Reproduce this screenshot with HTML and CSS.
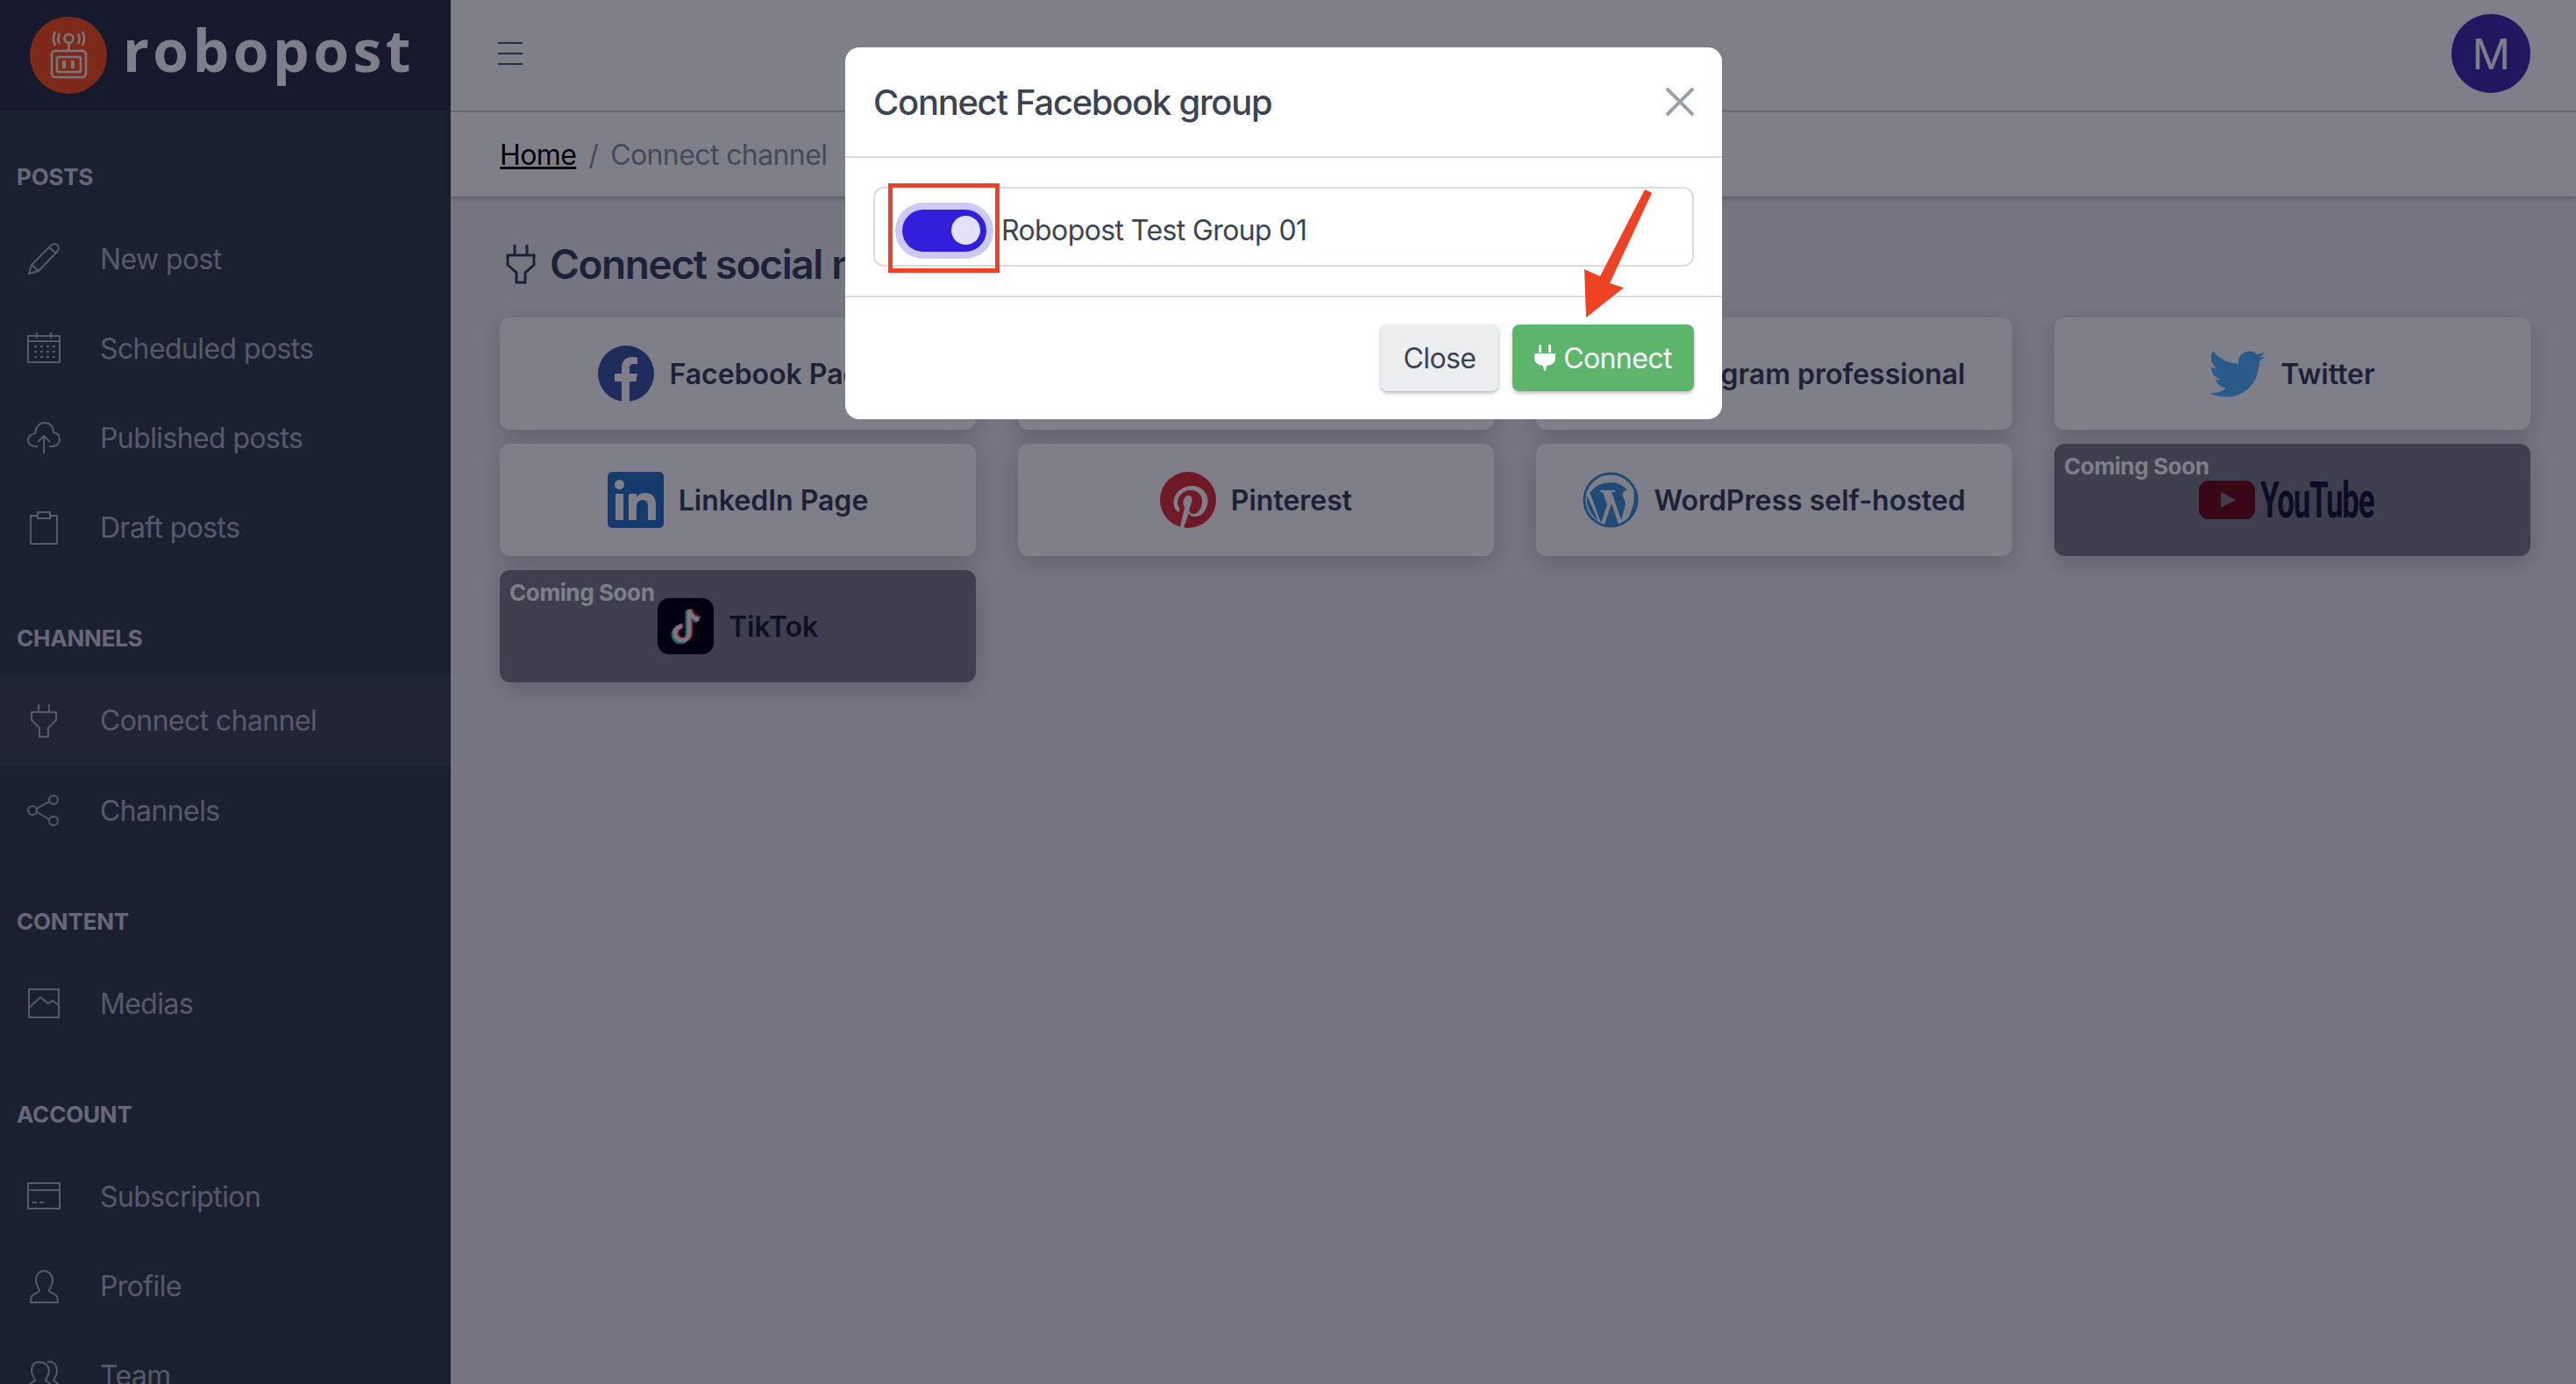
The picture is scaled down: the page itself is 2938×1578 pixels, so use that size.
FILE: index.html
```html
<!DOCTYPE html>
<html lang="en">

<head>
    <meta charset="utf-8">
    <title>Connect channel</title>
    <link rel="stylesheet" href="styles.css">
</head>

<body>
    <div class="app">
        <aside class="sidebar">
            <div class="brand">
                <span class="brand-logo">
                    <svg viewBox="0 0 88 88" width="88" height="88" fill="none" stroke="currentColor" stroke-width="2.5">
                        <rect x="25" y="39" width="39" height="30" rx="4" />
                        <rect x="31" y="46" width="27" height="17" rx="2" />
                        <path d="M39 50v9M49 50v9" stroke-width="4" />
                        <circle cx="44.500" cy="25" r="5" />
                        <path d="M44.500 30v9M34 19q-3 6 0 12M29 17q-4 8 0 16M55 19q3 6 0 12M60 17q4 8 0 16" />
                    </svg>
                </span>
                <span class="brand-name">robopost</span>
            </div>
            <nav class="nav">
                <div class="nav-title">Posts</div>
                <a class="nav-link">
                    <svg class="nav-icon" viewBox="0 0 38 38"><path d="M2 36l3-10L27 4q4-3 7-1t1 7L13 33zM5 26l8 7M25 6l8 7" /></svg>
                    New post
                </a>
                <a class="nav-link">
                    <svg class="nav-icon" viewBox="0 0 38 38"><path d="M1 5h36v30H1zM11 1v7M27 1v7M1 11h36" /><path d="M8 17h3M15 17h3M22 17h3M29 17h3M8 23h3M15 23h3M22 23h3M29 23h3M8 29h3M15 29h3M22 29h3M29 29h3" /></svg>
                    Scheduled posts
                </a>
                <a class="nav-link">
                    <svg class="nav-icon" viewBox="0 0 38 38"><path d="M12 29H9q-8-1-8-7t8-8q2-12 11-12t10 11q7 1 7 8t-8 8h-4M19 37V18M12 24l7-7 7 7" /></svg>
                    Published posts
                </a>
                <a class="nav-link">
                    <svg class="nav-icon" viewBox="0 0 38 38"><path d="M12 5H4v32h30V5h-8M12 1h14v7H12z" /></svg>
                    Draft posts
                </a>
                <div class="nav-title">Channels</div>
                <a class="nav-link is-active">
                    <svg class="nav-icon" viewBox="0 0 38 38"><path d="M13 0v9M25 0v9M5 9h28v9L24 27v10H14V27L5 18z" /></svg>
                    Connect channel
                </a>
                <a class="nav-link">
                    <svg class="nav-icon" viewBox="0 0 38 38"><circle cx="6" cy="19" r="5" /><circle cx="30" cy="7" r="5" /><circle cx="30" cy="31" r="5" /><path d="M11 17l14-8M11 21l14 8" /></svg>
                    Channels
                </a>
                <div class="nav-title">Content</div>
                <a class="nav-link">
                    <svg class="nav-icon" viewBox="0 0 38 38"><path d="M2 3h34v32H2zM2 24l13-12 9 7 5-3 7 5" /></svg>
                    Medias
                </a>
                <div class="nav-title">Account</div>
                <a class="nav-link">
                    <svg class="nav-icon" viewBox="0 0 38 38"><path d="M1 4h36v29H1zM1 12h36M6 26h5M14 26h5" /></svg>
                    Subscription
                </a>
                <a class="nav-link">
                    <svg class="nav-icon" viewBox="0 0 38 38"><path d="M19 1c-6 0-9 5-9 11s4 9 4 12l-8 5q-2 2-2 8h31q0-6-2-8l-8-5c0-3 4-6 4-12S25 1 19 1zM4 37h31" /></svg>
                    Profile
                </a>
                <a class="nav-link">
                    <svg class="nav-icon" viewBox="0 0 38 38"><path d="M14 3c-6 0-9 4-9 10s4 8 4 11l-7 5v8h26v-8l-7-5c0-3 4-5 4-11S20 3 14 3zM23 3c6-2 11 3 11 10s-4 8-4 11l7 5v8" /></svg>
                    Team
                </a>
            </nav>
        </aside>

        <div class="wrapper">
            <header class="topbar">
                <span class="burger"><i></i><i></i><i></i></span>
                <span class="avatar">M</span>
            </header>
            <div class="crumbs">
                <a class="crumb-link">Home</a>
                <span class="crumb-sep">/</span>
                <span class="crumb-current">Connect channel</span>
            </div>
            <main class="content">
                <h1 class="page-title">
                    <svg class="title-icon" viewBox="0 0 34 46"><path d="M10 1v12M24 1v12M2 13h30v11L22 33v11H12V33L2 24z" /></svg>
                    Connect social media
                </h1>
                <div class="card-grid">
                    <div class="card">
                        <svg class="card-icon" viewBox="0 0 64 64"><circle cx="32" cy="32" r="32" fill="#3e5aa2" /><path d="M27 64V41h-8v-9h8v-7c0-8 5-12 12-12q4 0 6 .5V21h-4c-4 0-5 2-5 5v6h9l-1.500 9H36v23z" fill="#fff" /></svg>
                        <span>Facebook Page</span>
                    </div>
                    <div class="card">
                        <svg class="card-icon" viewBox="0 0 64 64"><circle cx="32" cy="32" r="32" fill="#3e5aa2" /></svg>
                        <span>Facebook Group</span>
                    </div>
                    <div class="card">
                        <svg class="card-icon" viewBox="0 0 64 64"><rect width="64" height="64" rx="16" fill="#c13584" /></svg>
                        <span>Instagram professional</span>
                    </div>
                    <div class="card">
                        <svg class="card-icon" viewBox="0 0 64 54"><path d="M64 7q-3.500 1.600-7.500 2 4-2.500 6-7-4 2.300-8.300 3.100C47 -3 31 3 33 16 20 15 10 9 4 1c-4 7-2 15 4 20q-3 0-6-1.500C2 26 6 32 13 33.500q-3 .8-6 .2c2 6 7 9 12 10-5 4-12 6-19 5 24 13 56 0 57-36q4-2.500 7-6z" fill="#54b4ff" /></svg>
                        <span>Twitter</span>
                    </div>
                    <div class="card">
                        <svg class="card-icon" viewBox="0 0 64 64"><rect width="64" height="64" rx="5" fill="#2e74c4" /><path d="M9 25h9v30H9zM13.500 9a5.500 5.500 0 1 1 0 11 5.500 5.500 0 0 1 0-11zM24 25h9v4c2-3 5-5 10-5 9 0 12 6 12 14v17h-9V40c0-5-1.500-8-6-8s-7 3-7 8v15h-9z" fill="#fff" /></svg>
                        <span>LinkedIn Page</span>
                    </div>
                    <div class="card">
                        <svg class="card-icon" viewBox="0 0 64 64"><circle cx="32" cy="32" r="32" fill="#e23438" /><path d="M23 63l5-22q-1.500-3-1.500-6c0-5 3-8 6-8 3 0 4 2 4 4.500 0 3-2 7-3 11-.7 3 1.500 5.500 4.500 5.500 6 0 10-7 10-15 0-7-5-12-13-12-9 0-15 7-15 14q0 4 2.500 7l-1 4q-6-3-6-11c0-9 8-19 21-19 11 0 18 8 18 16 0 11-6 19-15 19-3 0-6-2-7-4l-2 7q-1.500 5-4 10z" fill="#fff" /></svg>
                        <span>Pinterest</span>
                    </div>
                    <div class="card">
                        <svg class="card-icon" viewBox="0 0 64 64"><circle cx="32" cy="32" r="30" fill="none" stroke="#3e96d6" stroke-width="3" /><path d="M8 23l13 35 7-20-5-15h-3v-2h17v2h-4l11 32 4-14c2-7-1-10-2-13-1-4 1-7 5-7q-8-9-19-9-15 0-23 11h5zM5 27q-2 16 13 29zM33 36l-8 24q7 2 16 0zM58 21q3 12-5 30l-6 7q14-8 14-26 0-6-3-11z" fill="#3e96d6" /></svg>
                        <span>WordPress self-hosted</span>
                    </div>
                    <div class="card is-soon">
                        <span class="soon-tag">Coming Soon</span>
                        <span class="yt-logo">
                            <svg class="yt-icon" viewBox="0 0 64 44"><rect width="64" height="44" rx="11" fill="#750e1c" /><path d="M25 13l17 9-17 9z" fill="#7e7e8a" /></svg>
                            <span class="yt-name">YouTube</span>
                        </span>
                    </div>
                    <div class="card is-soon">
                        <span class="soon-tag">Coming Soon</span>
                        <svg class="card-icon" viewBox="0 0 64 64">
                            <rect width="64" height="64" rx="13" fill="#00000a" />
                            <path d="M36 13v27a8 8 0 1 1-8-8M36 13q1 9 11 11" fill="none" stroke="#3ec0c4" stroke-width="6" transform="translate(-1.500 1.500)" />
                            <path d="M36 13v27a8 8 0 1 1-8-8M36 13q1 9 11 11" fill="none" stroke="#fe2c55" stroke-width="6" transform="translate(1.500 -.5)" />
                            <path d="M36 13v27a8 8 0 1 1-8-8M36 13q1 9 11 11" fill="none" stroke="#eee" stroke-width="5" />
                        </svg>
                        <span>TikTok</span>
                    </div>
                </div>
            </main>
        </div>
    </div>

    <div class="backdrop"></div>

    <div class="modal">
        <div class="modal-header">
            <h2 class="modal-title">Connect Facebook group</h2>
            <svg class="modal-close" viewBox="0 0 32 32"><path d="M1 1l30 30M31 1L1 31" /></svg>
        </div>
        <div class="modal-body">
            <div class="list-item">
                <span class="toggle"><span class="toggle-thumb"></span></span>
                <span>Robopost Test Group 01</span>
            </div>
        </div>
        <div class="modal-footer">
            <button class="btn btn-light">Close</button>
            <button class="btn btn-green">
                <svg class="btn-icon" viewBox="0 0 24 30"><path d="M5 0h3v9H5zM16 0h3v9h-3zM0 10h24v5c0 5-3 8-10 9l-1 6h-2l-1-6C3 23 0 20 0 15z" /></svg>
                Connect
            </button>
        </div>
        <span class="mark-box"></span>
        <svg class="mark-arrow" viewBox="0 0 90 160"><path d="M76 6l8 4-48 103 16 5-43 34-2-55 18 8z" /></svg>
    </div>
</body>

</html>
```

FILE: styles.css
```css
* {
    margin: 0;
    padding: 0;
    box-sizing: border-box;
}

html,
body {
    height: 100%;
    overflow: hidden;
}

body {
    font-family: 'Inter', 'Liberation Sans', sans-serif;
    font-size: 32px;
    letter-spacing: -0.6px;
    color: #2c384a;
    background-color: #ebedef;
}

.app {
    display: flex;
    height: 100vh;
}

.sidebar {
    flex: 0 0 514px;
    background-color: #38424c;
    color: #b0b4bf;
    overflow: hidden;
}

.brand {
    display: flex;
    align-items: center;
    gap: 18px;
    height: 126px;
    padding-left: 34px;
    background-color: #2c3443;
    color: #fff;
}

.brand-logo {
    display: block;
    width: 88px;
    height: 88px;
    border-radius: 50%;
    background-color: #fa5420;
    color: #f4ece8;
}

.brand-name {
    font-family: 'Open Sans', sans-serif;
    font-size: 66px;
    font-weight: 700;
    letter-spacing: 4.400px;
    line-height: 1;
    margin-top: -14px;
}

.nav-title {
    display: flex;
    align-items: center;
    height: 86px;
    margin-top: 32px;
    padding-left: 19px;
    font-size: 26px;
    font-weight: 700;
    letter-spacing: -0.2px;
    text-transform: uppercase;
    color: #d0d3db;
}

.nav-link {
    display: flex;
    align-items: center;
    gap: 45px;
    height: 102.200px;
    padding-left: 31px;
}

.nav-link.is-active {
    background-color: rgba(255, 255, 255, 0.05);
}

.nav-icon {
    flex: none;
    width: 38px;
    height: 38px;
    fill: none;
    stroke: currentColor;
    stroke-width: 2;
}

.wrapper {
    flex: 1;
    display: flex;
    flex-direction: column;
    min-width: 0;
}

.topbar {
    display: flex;
    align-items: center;
    justify-content: space-between;
    height: 128px;
    padding: 0 52px 4px 54px;
    background-color: #fff;
    border-bottom: 2px solid #d8dbe0;
}

.burger {
    display: flex;
    flex-direction: column;
    gap: 10px;
    width: 28px;
}

.burger i {
    display: block;
    height: 2px;
    background-color: #4f5d73;
}

.avatar {
    display: flex;
    align-items: center;
    justify-content: center;
    width: 90px;
    height: 90px;
    border-radius: 50%;
    background-color: #442ead;
    color: #fff;
    font-size: 48px;
}

.crumbs {
    display: flex;
    align-items: center;
    gap: 14px;
    height: 96px;
    padding-left: 56px;
    background-color: #fff;
    box-shadow: 0 2px 6px rgba(0, 0, 21, 0.25);
    position: relative;
}

.crumb-link {
    color: #000;
    text-decoration: underline;
}

.crumb-sep,
.crumb-current {
    color: #8a93a2;
}

.content {
    padding: 41px 52px 0 56px;
}

.page-title {
    display: flex;
    align-items: center;
    gap: 16px;
    height: 72px;
    margin-bottom: 25px;
    padding-left: 7px;
    font-size: 46px;
    font-weight: 600;
    letter-spacing: -1.400px;
    white-space: nowrap;
    color: #3c4457;
}

.title-icon {
    flex: none;
    width: 34px;
    height: 46px;
    fill: none;
    stroke: currentColor;
    stroke-width: 3;
}

.card-grid {
    display: grid;
    grid-template-columns: repeat(4, 543px);
    grid-auto-rows: 128px;
    column-gap: 48px;
    row-gap: 16px;
}

.card {
    position: relative;
    display: flex;
    align-items: center;
    justify-content: center;
    gap: 17px;
    border-radius: 12px;
    background-color: #fff;
    box-shadow: 0 8px 28px rgba(0, 0, 21, 0.18);
    font-size: 32px;
    font-weight: 600;
    letter-spacing: 0;
    color: #3c4457;
}

.card.is-soon {
    background-color: #7e7e8a;
    color: #1e2030;
}

.card-icon {
    flex: none;
    width: 64px;
    height: 64px;
}

.soon-tag {
    position: absolute;
    top: 10px;
    left: 11px;
    font-size: 26px;
    line-height: 32px;
    font-weight: 700;
    letter-spacing: -0.4px;
    color: #fff;
}

.yt-logo {
    display: flex;
    align-items: center;
    gap: 6px;
    width: 214px;
}

.yt-icon {
    flex: none;
    width: 64px;
    height: 44px;
}

.yt-name {
    display: block;
    font-family: 'Roboto', sans-serif;
    font-size: 58px;
    font-weight: 700;
    letter-spacing: -2px;
    line-height: 1;
    color: #18182e;
    transform: scaleX(0.6);
    transform-origin: left center;
}

.backdrop {
    position: fixed;
    inset: 0;
    background-color: rgba(0, 0, 21, 0.5);
}

.modal {
    position: fixed;
    top: 54px;
    left: 964px;
    width: 1000px;
    background-color: #fff;
    border-radius: 16px;
    color: #3c4454;
}

.modal-header {
    display: flex;
    align-items: center;
    justify-content: space-between;
    height: 126px;
    padding: 0 32px;
    border-bottom: 2px solid #d8dbe0;
}

.modal-title {
    font-size: 40px;
    font-weight: 500;
    letter-spacing: -1.300px;
}

.modal-close {
    width: 32px;
    height: 32px;
    fill: none;
    stroke: #9a9ea8;
    stroke-width: 4;
}

.modal-body {
    padding: 33px 32px;
    border-bottom: 2px solid #d8dbe0;
}

.list-item {
    display: flex;
    align-items: center;
    gap: 17px;
    height: 91px;
    padding: 8px 31px 0;
    border: 2px solid #d8dbe0;
    border-radius: 12px;
}

.toggle {
    position: relative;
    display: block;
    width: 96px;
    height: 48px;
    border-radius: 24px;
    background-color: #321fdb;
    box-shadow: 0 0 0 8px #cdc9f5;
}

.toggle-thumb {
    position: absolute;
    top: 7px;
    right: 7px;
    width: 33px;
    height: 33px;
    border-radius: 50%;
    background-color: #e4e2fa;
}

.modal-footer {
    display: flex;
    justify-content: flex-end;
    gap: 16px;
    padding: 31px 32px 32px;
}

.btn {
    display: flex;
    align-items: center;
    justify-content: center;
    height: 76px;
    border: none;
    border-radius: 8px;
    font-family: inherit;
    font-size: 32px;
    letter-spacing: -0.6px;
    box-shadow: 0 2px 4px rgba(0, 0, 21, 0.3);
}

.btn-light {
    width: 134px;
    background-color: #ebedef;
    color: #3c4454;
}

.btn-green {
    width: 207px;
    gap: 9px;
    background-color: #5cb56b;
    color: #fff;
}

.btn-icon {
    width: 24px;
    height: 30px;
    fill: #fff;
}

.mark-box {
    position: absolute;
    top: 155px;
    left: 49px;
    width: 127px;
    height: 102px;
    border: 5px solid #ef4123;
}

.mark-arrow {
    position: absolute;
    top: 156px;
    left: 836px;
    width: 90px;
    height: 160px;
    fill: #ef4123;
}
```
